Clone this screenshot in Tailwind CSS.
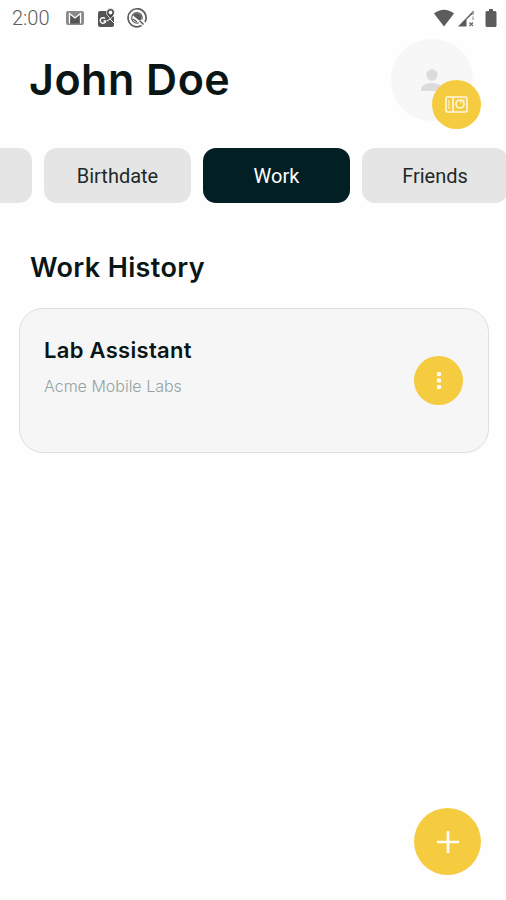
<!DOCTYPE html>
<html lang="en">
<head>
    <meta charset="UTF-8">
    <meta name="viewport" content="width=device-width, initial-scale=1.0">
    <title>John Doe - Work</title>
    <script src="https://cdn.jsdelivr.net/npm/@tailwindcss/browser@4"></script>
</head>
<body class="bg-white">
    <div class="relative flex flex-col h-[900px] w-[506px] overflow-hidden bg-[#fefefe] font-['Inter',sans-serif] text-[#0a1616]">

        <!-- Status bar -->
        <div class="flex items-center justify-between h-9 pl-3 pr-[9px] shrink-0 text-[#5c5c5c]">
            <div class="flex items-center">
                <span class="w-[53px] font-['Roboto',sans-serif] font-light text-[20px] leading-9">2:00</span>
                <svg class="w-5 h-4" viewBox="0 0 20 16" fill="none">
                    <rect x="1" y="1" width="18" height="14" rx="2" fill="#8a8a8a"/>
                    <path d="M4.500 13.500V3.500l5.500 4.500 5.500-4.500v10z" fill="#555"/>
                    <path d="M4.500 13.500V3.500l5.500 4.500 5.500-4.500v10" stroke="#fff" stroke-width="1.300"/>
                </svg>
                <svg class="ml-3 w-[19px] h-5" viewBox="0 0 19 20" fill="none">
                    <path d="M3 3h8l6 6v8a2 2 0 0 1-2 2H3a2 2 0 0 1-2-2V5a2 2 0 0 1 2-2z" fill="#555"/>
                    <path d="M10 13l3-2 4 4" stroke="#fff" stroke-width="1"/>
                    <path d="M8 10.500A2.800 2.800 0 1 0 8.800 13H6.500" stroke="#fff" stroke-width="1.400"/>
                    <path d="M13.500 .5a4 4 0 0 1 4 4c0 2.500-2.500 4-4 6.500C12 8.500 9.500 7 9.500 4.500a4 4 0 0 1 4-4z" fill="#444" stroke="#fff" stroke-width=".8"/>
                    <circle cx="13.500" cy="4.500" r="1.900" fill="#fff"/>
                </svg>
                <svg class="ml-2.5 w-[22px] h-[22px]" viewBox="0 0 22 22" fill="none" stroke="#5c5c5c">
                    <path d="M15.500 18.600A9 9 0 1 1 19 15" stroke-width="1.700"/>
                    <path d="M13 15.800A5.300 5.300 0 1 1 16 12.500" stroke-width="1.200"/>
                    <path d="M7 8.500a4.300 4.300 0 0 1 8 4.500L12.500 13z" fill="#5c5c5c" stroke="none"/>
                    <path d="M7 12l4 3M13.500 13.500l4 4" stroke-width="1.500"/>
                </svg>
            </div>
            <div class="flex items-center">
                <svg class="w-[22px] h-[18px]" viewBox="0 0 22 18"><path d="M1 4.500Q11-3 21 4.500L11 17.500z" fill="#5c5c5c"/></svg>
                <svg class="ml-0.5 w-[18px] h-[18px]" viewBox="0 0 18 18">
                    <path d="M1 17.500L16.500 1.500v2.500L9.500 10.500v7z" fill="#5c5c5c"/>
                    <path d="M16 2v9" stroke="#999" stroke-width="1.200" stroke-dasharray="4 1.500"/>
                    <path d="M12.500 13.500l3.500 3.500m0-3.500L12.500 17" stroke="#6c6c6c" stroke-width="1.400"/>
                </svg>
                <svg class="ml-2.5 w-3 h-[18px]" viewBox="0 0 12 18"><path d="M4 0h4v2h2a1.500 1.500 0 0 1 1.500 1.500v13A1.500 1.500 0 0 1 10 18H2a1.500 1.500 0 0 1-1.500-1.500v-13A1.500 1.500 0 0 1 2 2h2z" fill="#5c5c5c"/></svg>
            </div>
        </div>

        <!-- Name and avatar -->
        <header class="flex justify-between h-28 pl-[29px] pr-[33px] pt-[3px] shrink-0">
            <h1 class="mt-[13px] text-[43px] leading-[54px] font-semibold tracking-[0.5px] whitespace-nowrap">John Doe</h1>
            <div class="relative flex items-center justify-center size-[82px] rounded-full bg-[#f7f7f7]">
                <svg class="w-[22px] h-[23px]" viewBox="0 0 22 23" fill="#dcdcdc">
                    <circle cx="11" cy="6" r="5.700"/>
                    <path d="M0 22v-2c0-4 7-6 11-6s11 2 11 6v2z"/>
                </svg>
                <button class="absolute left-[41px] top-[41px] flex items-center justify-center size-[49px] rounded-full bg-[#f5cb3f]">
                    <svg class="w-[23px] h-[17px]" viewBox="0 0 23 17" fill="none" stroke="#fff8e4" stroke-width="1.600">
                        <rect x="1" y="1" width="21" height="15" rx="1.500"/>
                        <path d="M4 4v9" stroke-width="1"/>
                        <path d="M8 1v15"/>
                        <circle cx="15" cy="8" r="4"/>
                        <path d="M15 5.500l1.500 1.500M18 4h2" stroke-width="1.100"/>
                    </svg>
                </button>
            </div>
        </header>

        <!-- Tabs -->
        <nav class="flex gap-3 -ml-[115px] h-[55px] shrink-0 text-[20px] font-['Roboto',sans-serif] text-[#1e2a2a]">
            <div class="w-[147px] shrink-0 rounded-[13px] bg-[#e5e5e5]"></div>
            <button class="w-[147px] shrink-0 rounded-[13px] bg-[#e5e5e5]">Birthdate</button>
            <button class="w-[147px] shrink-0 rounded-[13px] bg-[#022023] text-white">Work</button>
            <button class="w-[146px] shrink-0 rounded-[13px] bg-[#e5e5e5]">Friends</button>
        </nav>

        <!-- Work history -->
        <main class="flex flex-col pl-[19px] pr-[17px] pt-12">
            <h2 class="ml-[11px] text-[27px] leading-[34px] font-semibold tracking-[0.35px]">Work History</h2>
            <div class="mt-[23px] flex items-center justify-between h-[145px] pl-6 pr-[25px] rounded-[24px] border border-[#dedede] bg-[#f6f6f6]">
                <div class="self-start pt-[26px]">
                    <h3 class="text-[22px] leading-[30px] font-semibold tracking-[0.3px]">Lab Assistant</h3>
                    <p class="mt-[9px] text-[16px] leading-6 font-light text-[#94a3a2]">Acme Mobile Labs</p>
                </div>
                <button class="flex items-center justify-center size-[49px] rounded-full bg-[#f5cb3f]">
                    <svg class="w-1.5 h-5" viewBox="0 0 6 20" fill="#fffdf5">
                        <circle cx="3" cy="3" r="2.300"/>
                        <circle cx="3" cy="9.500" r="2.300"/>
                        <circle cx="3" cy="16" r="2.300"/>
                    </svg>
                </button>
            </div>
        </main>

        <!-- Add button -->
        <button class="absolute left-[414px] top-[808px] flex items-center justify-center size-[67px] rounded-full bg-[#f5cb3f]">
            <svg class="size-6" viewBox="0 0 24 24" stroke="#fffdf5" stroke-width="2.700" stroke-linecap="round"><path d="M12 2v20M2 12h20"/></svg>
        </button>
    </div>
</body>
</html>
